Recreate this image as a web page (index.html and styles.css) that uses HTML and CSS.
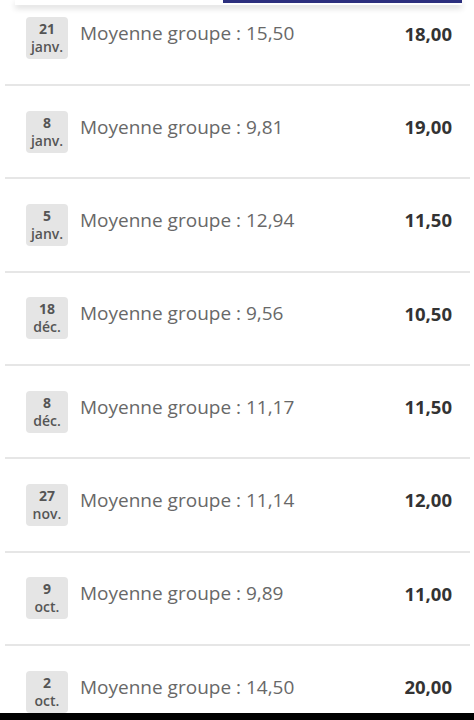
FILE: index.html
```html
<!DOCTYPE html>
<html lang="fr">
<head>
<meta charset="utf-8">
<link rel="stylesheet" href="styles.css">
</head>
<body>
<div class="topbar"><div class="tab-indicator"></div></div>
<ul class="list">
  <li class="row"><div class="date"><b>21</b><span>janv.</span></div><div class="label">Moyenne groupe : 15,50</div><div class="grade">18,00</div></li>
  <li class="row"><div class="date"><b>8</b><span>janv.</span></div><div class="label">Moyenne groupe : 9,81</div><div class="grade">19,00</div></li>
  <li class="row"><div class="date"><b>5</b><span>janv.</span></div><div class="label">Moyenne groupe : 12,94</div><div class="grade">11,50</div></li>
  <li class="row"><div class="date"><b>18</b><span>déc.</span></div><div class="label">Moyenne groupe : 9,56</div><div class="grade">10,50</div></li>
  <li class="row"><div class="date"><b>8</b><span>déc.</span></div><div class="label">Moyenne groupe : 11,17</div><div class="grade">11,50</div></li>
  <li class="row"><div class="date"><b>27</b><span>nov.</span></div><div class="label">Moyenne groupe : 11,14</div><div class="grade">12,00</div></li>
  <li class="row"><div class="date"><b>9</b><span>oct.</span></div><div class="label">Moyenne groupe : 9,89</div><div class="grade">11,00</div></li>
  <li class="row"><div class="date"><b>2</b><span>oct.</span></div><div class="label">Moyenne groupe : 14,50</div><div class="grade">20,00</div></li>
</ul>
<div class="navbar"></div>
</body>
</html>
```
FILE: styles.css
```css
html, body {
  margin: 0;
  padding: 0;
  background: #ffffff;
  font-family: "Open Sans", "DejaVu Sans", sans-serif;
  overflow: hidden;
}
.topbar {
  position: fixed;
  top: 0;
  left: 15px;
  width: 447px;
  height: 5px;
  background: #ffffff;
  box-shadow: 0 3px 6px rgba(0,0,0,0.16);
  z-index: 2;
}
.tab-indicator {
  margin-left: 208px;
  height: 3px;
  background: #2c2f7e;
}
.list {
  list-style: none;
  margin: -7.33px 0 0 0;
  padding: 0 4px 0 5px;
}
.row {
  height: 91.33px;
  border-bottom: 2px solid #e6e6e6;
  display: flex;
  align-items: center;
  padding: 0 18px 0 21px;
  box-sizing: content-box;
}
.date {
  width: 42px;
  height: 42px;
  background: #e5e5e5;
  border-radius: 4px;
  display: flex;
  flex-direction: column;
  align-items: center;
  justify-content: center;
  color: #555555;
  font-size: 14px;
  line-height: 18px;
  font-weight: 600;
}
.date b { font-weight: 700; }
.label {
  flex: 1;
  margin-left: 12px;
  margin-top: -10px;
  font-size: 19px;
  color: #686868;
}
.grade {
  margin-top: -10px;
  font-size: 18.5px;
  font-weight: 700;
  color: #333333;
}
.navbar {
  position: fixed;
  left: 0;
  right: 0;
  bottom: 0;
  height: 7px;
  background: #000000;
}
```
